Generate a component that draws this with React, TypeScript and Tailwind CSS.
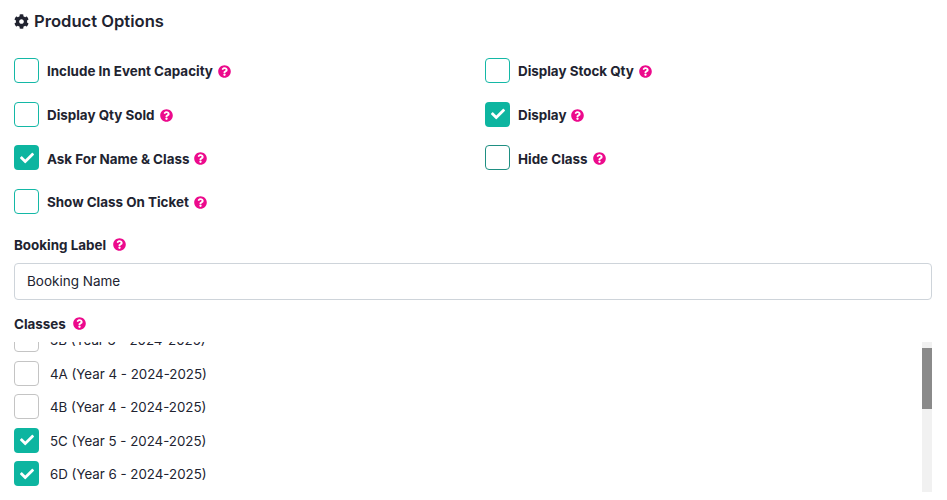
import React, { useEffect, useRef } from "react";
import { FaCheck, FaCog, FaQuestionCircle } from "react-icons/fa";

const optionRows: { label: string; checked?: boolean; grey?: boolean }[][] = [
  [{ label: "Include In Event Capacity" }, { label: "Display Stock Qty" }],
  [{ label: "Display Qty Sold" }, { label: "Display", checked: true }],
  [{ label: "Ask For Name & Class", checked: true }, { label: "Hide Class", grey: true }],
  [{ label: "Show Class On Ticket" }],
];

const classes = [
  { label: "3B (Year 3 - 2024-2025)", checked: false },
  { label: "4A (Year 4 - 2024-2025)", checked: false },
  { label: "4B (Year 4 - 2024-2025)", checked: false },
  { label: "5C (Year 5 - 2024-2025)", checked: true },
  { label: "6D (Year 6 - 2024-2025)", checked: true },
];

function Help() {
  return <FaQuestionCircle className="h-[13px] w-[13px] shrink-0 text-[#ec0a8c]" />;
}

function Box({ checked, border }: { checked?: boolean; border: string }) {
  if (checked) {
    return (
      <span className="flex h-[25px] w-[25px] shrink-0 items-center justify-center rounded-[4px] bg-[#0db5a0] text-white">
        <FaCheck className="h-[14px] w-[14px]" />
      </span>
    );
  }
  return <span className={`block h-[25px] w-[25px] shrink-0 rounded-[4px] border bg-white ${border}`} />;
}

export default function App() {
  const listRef = useRef<HTMLDivElement>(null);

  useEffect(() => {
    if (listRef.current) listRef.current.scrollTop = 19;
  }, []);

  return (
    <div className="h-[500px] w-[947px] overflow-hidden bg-white px-[14px] font-['Inter',sans-serif] text-[#212330]">
      <h2 className="flex h-[42px] items-center gap-[5px] text-[16.6px] font-semibold">
        <FaCog className="h-[15px] w-[15px]" />
        Product Options
      </h2>

      <div className="mt-[16px] flex flex-col gap-[18.6px]">
        {optionRows.map((row, i) => (
          <div key={i} className="grid w-[918px] grid-cols-2 gap-x-[24px]">
            {row.map((opt) => (
              <div key={opt.label} className="flex h-[25px] items-center">
                <Box
                  checked={opt.checked}
                  border={opt.grey ? "border-[#1f8f82]" : "border-[#14b8a6]"}
                />
                <span className="ml-[8px] pt-[2px] text-[13.4px] font-bold">{opt.label}</span>
                <span className="ml-[5px] pt-[2px]"><Help /></span>
              </div>
            ))}
          </div>
        ))}
      </div>

      <div className="mt-[21px] flex h-[20px] items-center gap-[7px] text-[13.4px] font-bold">
        Booking Label
        <Help />
      </div>
      <input
        readOnly
        value="Booking Name"
        className="mt-[8px] block h-[37px] w-[918px] rounded-[4px] border border-[#ced4da] px-[12px] text-[13.5px] text-[#212330] outline-none"
      />

      <div className="mt-[14px] flex h-[20px] items-center gap-[7px] text-[13.4px] font-bold">
        Classes
        <Help />
      </div>

      <div className="mt-[8px] flex h-[150px] w-[918px]">
        <div ref={listRef} className="min-w-0 flex-1 overflow-hidden">
          {classes.map((c) => (
            <div key={c.label} className="flex h-[33.6px] items-center">
              <Box checked={c.checked} border="border-[#c4c4c4]" />
              <span className="ml-[11px] pt-[3px] text-[13.3px]">{c.label}</span>
            </div>
          ))}
          <div className="h-[201px]" />
        </div>
        {/* headless chrome hides native scrollbars, so the bar is drawn */}
        <div className="w-[10px] shrink-0 bg-[#f1f1f1] pt-[6px]">
          <div className="h-[61px] bg-[#8a8a8a]" />
        </div>
      </div>
    </div>
  );
}
